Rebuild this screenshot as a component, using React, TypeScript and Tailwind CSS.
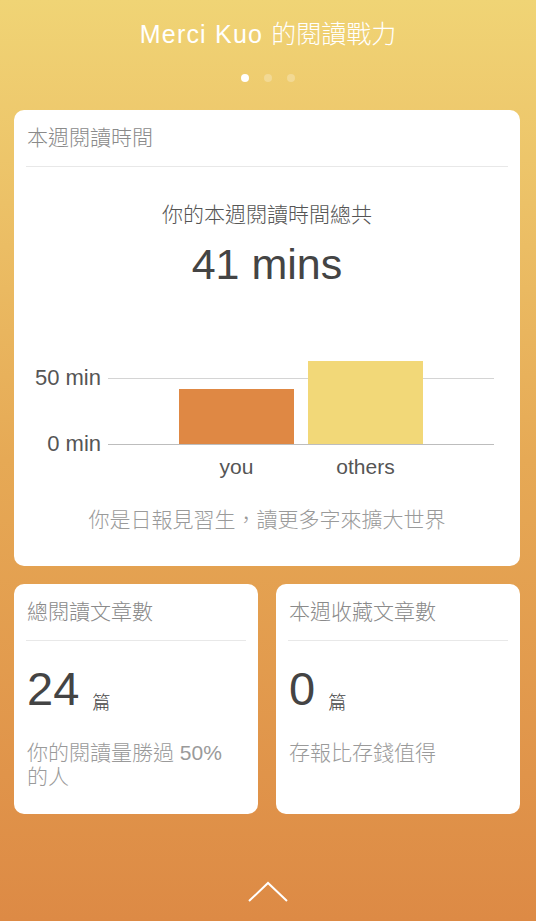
const font = { fontFamily: '"Liberation Sans", "Noto Sans CJK TC", sans-serif' };

function CardHeader({ title }: { title: string }) {
  return (
    <div className="mx-3 flex h-[57px] items-center border-b border-[#e8e8e8] pl-px text-[21px] text-[#8a8a8a]">
      {title}
    </div>
  );
}

function WeeklyChart() {
  const max = 50;
  const plotScale = 66 / max; // px per minute
  const data = [
    { label: "you", value: 41, color: "bg-[#df8844]" },
    { label: "others", value: 62, color: "bg-[#f2d878]" },
  ];

  return (
    <div className="mt-[67px]">
      <div className="flex">
        <div className="relative h-[90px] w-[87px] text-[22px] text-[#555]">
          <span className="absolute right-0 top-[23px] -translate-y-1/2 leading-none">50 min</span>
          <span className="absolute right-0 top-[89px] -translate-y-1/2 leading-none">0 min</span>
        </div>
        <div className="relative ml-[7px] h-[90px] w-[386px] border-b border-[#bdbdbd]">
          <div className="absolute left-0 right-0 top-[23px] h-px bg-[#d4d4d4]" />
          <div className="relative flex h-full items-end gap-[14px] pl-[71px]">
            {data.map((d) => (
              <div
                key={d.label}
                className={`w-[115px] ${d.color}`}
                style={{ height: Math.round(d.value * plotScale) + 1 }}
              />
            ))}
          </div>
        </div>
      </div>
      <div className="mt-[10px] flex gap-[14px] pl-[165px] text-[21px] leading-[24px] text-[#555]">
        {data.map((d) => (
          <div key={d.label} className="w-[115px] text-center">
            {d.label}
          </div>
        ))}
      </div>
    </div>
  );
}

function CountCard({ title, count, note }: { title: string; count: number; note: string }) {
  return (
    <div className="h-[230px] flex-1 rounded-[10px] bg-white">
      <CardHeader title={title} />
      <div className="mt-[25px] flex items-end px-[13px] text-[#444]">
        <span className="text-[47px] leading-[46px]">{count}</span>
        <span className="ml-[13px] text-[18px] leading-[18px]">篇</span>
      </div>
      <p className="mt-[29px] max-w-[236px] px-[13px] text-[21px] leading-[24px] text-[#9a9a9a]">{note}</p>
    </div>
  );
}

export default function App() {
  return (
    <div
      className="flex h-[921px] w-full flex-col bg-linear-to-b from-[#f0d475] via-[#e6a955] to-[#dd8a45] font-light"
      style={font}
    >
      <div className="flex h-[68px] items-center justify-center pt-px text-[25px] text-white">
        <span className="tracking-[1.2px]">Merci Kuo&nbsp;</span>的閱讀戰力
      </div>
      <div className="mt-[6px] flex justify-center gap-[15px]">
        <span className="h-[8px] w-[8px] rounded-full bg-white" />
        <span className="h-[8px] w-[8px] rounded-full bg-white/25" />
        <span className="h-[8px] w-[8px] rounded-full bg-white/25" />
      </div>

      <div className="ml-[14px] mt-[28px] h-[456px] w-[506px] rounded-[10px] bg-white">
        <CardHeader title="本週閱讀時間" />
        <p className="mt-[36px] text-center text-[21px] leading-[24px] text-[#555]">你的本週閱讀時間總共</p>
        <p className="mt-[13px] text-center text-[43px] leading-[48px] text-[#444]">41 mins</p>
        <WeeklyChart />
        <p className="mt-[28px] text-center text-[21px] leading-[26px] text-[#9a9a9a]">
          你是日報見習生，讀更多字來擴大世界
        </p>
      </div>

      <div className="ml-[14px] mt-[18px] flex w-[506px] gap-[18px]">
        <CountCard title="總閱讀文章數" count={24} note="你的閱讀量勝過 50% 的人" />
        <CountCard title="本週收藏文章數" count={0} note="存報比存錢值得" />
      </div>

      <div className="mt-[67px] flex justify-center">
        <svg width="42" height="22" viewBox="0 0 42 22" fill="none" stroke="white" strokeWidth="2">
          <polyline points="2,20 21,2 40,20" />
        </svg>
      </div>
    </div>
  );
}
